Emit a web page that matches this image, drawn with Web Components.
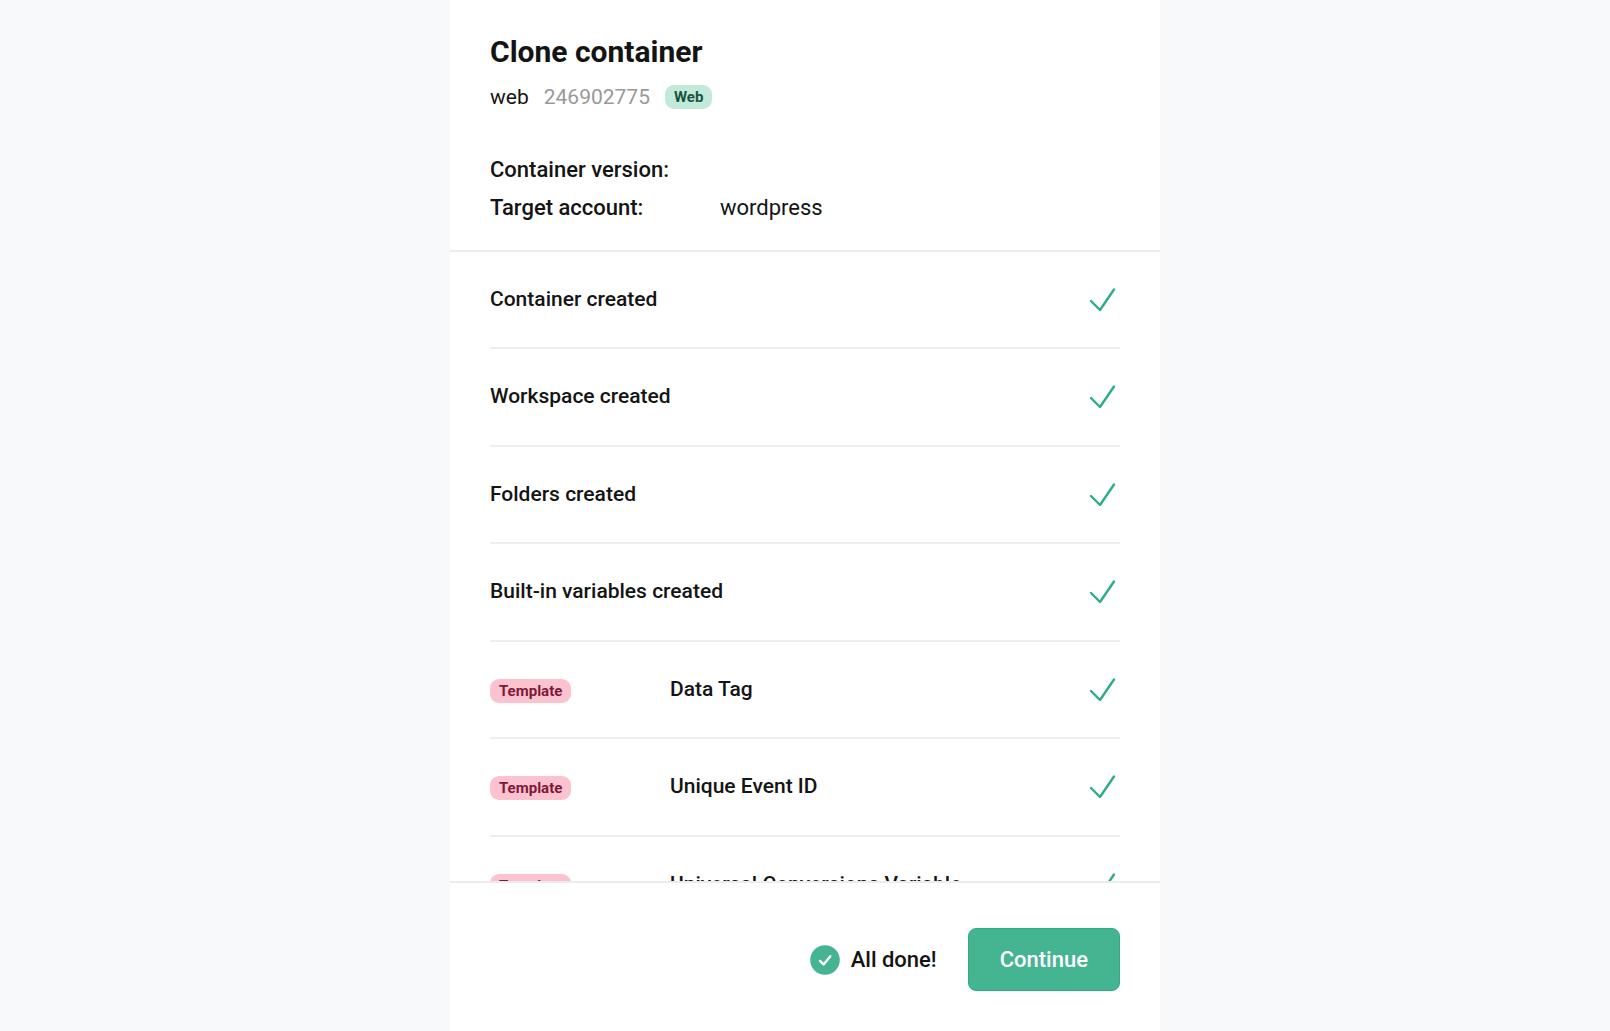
<!DOCTYPE html>
<html lang="en">
<head>
<meta charset="utf-8">
<meta name="viewport" content="width=device-width, initial-scale=1">
<title>Clone container</title>
<style>
  html, body { margin: 0; height: 100%; background: #f8f9fb; }
  body { font-family: Roboto, "Liberation Sans", sans-serif; color: #141414; display: flex; justify-content: center; }
</style>
</head>
<body>
<clone-panel>
  <clone-header slot="header" heading="Clone container" name="web" number="246902775" account="wordpress">
    <tag-badge slot="badge" tone="green">Web</tag-badge>
  </clone-header>
  <step-row>Container created</step-row>
  <step-row>Workspace created</step-row>
  <step-row>Folders created</step-row>
  <step-row>Built-in variables created</step-row>
  <step-row><tag-badge slot="kind" tone="pink">Template</tag-badge>Data Tag</step-row>
  <step-row><tag-badge slot="kind" tone="pink">Template</tag-badge>Unique Event ID</step-row>
  <step-row><tag-badge slot="kind" tone="pink">Template</tag-badge>Universal Conversions Variable</step-row>
  <panel-footer slot="footer" status="All done!">Continue</panel-footer>
</clone-panel>
<script>
const define = (name, html, setup) => customElements.define(name, class extends HTMLElement {
  constructor() {
    super();
    this.attachShadow({ mode: 'open' }).innerHTML = html;
  }
  connectedCallback() {
    this.shadowRoot.querySelectorAll('[data-attr]').forEach(node => {
      node.textContent = this.getAttribute(node.dataset.attr) || '';
    });
    if (setup) setup(this);
  }
});

define('tag-badge', `
<style>
  :host { display: inline-flex; align-items: center; height: 24px; padding: 0 9px; border-radius: 9px; font-size: 15px; line-height: 24px; font-weight: 700; }
  :host([tone=green]) { background: #c3e9db; color: #17543f; }
  :host([tone=pink]) { background: #fcc2d0; color: #7d1a38; }
</style><slot></slot>`);

define('clone-header', `
<style>
  :host { display: block; padding: 32px 40px 26px; border-bottom: 2px solid #ececec; }
  h1 { margin: 0; font-size: 30px; line-height: 40px; font-weight: 700; }
  .meta { display: flex; align-items: center; gap: 15px; margin-top: 9px; font-size: 21px; line-height: 32px; }
  .number { color: #999; }
  dl { display: grid; grid-template-columns: 200px 1fr; column-gap: 30px; row-gap: 6px; margin: 41px 0 0; font-size: 22px; line-height: 32px; }
  dt { font-weight: 500; }
  dd { margin: 0; }
</style>
<h1 data-attr="heading"></h1>
<div class="meta"><span data-attr="name"></span><span class="number" data-attr="number"></span><slot name="badge"></slot></div>
<dl><dt>Container version:</dt><dd></dd><dt>Target account:</dt><dd data-attr="account"></dd></dl>`);

define('step-row', `
<style>
  :host { display: flex; align-items: center; box-sizing: border-box; height: 98px; border-bottom: 2px solid #eeeeee; font-size: 21px; line-height: 32px; font-weight: 500; }
  :host(:nth-child(even)) { height: 97px; }
  .kind { width: 180px; padding-top: 2px; display: flex; }
  .kind[hidden] { display: none; }
  .text { flex: 1; padding-bottom: 2px; }
  svg { width: 36px; height: 36px; }
</style>
<div class="kind"><slot name="kind"></slot></div>
<div class="text"><slot></slot></div>
<svg viewBox="0 0 36 36" fill="none" stroke="#2bae82" stroke-width="2.400" stroke-linecap="round" stroke-linejoin="round" role="img" aria-label="Done"><path d="M7 19L16 28L30 7.500"/></svg>`,
  host => { host.shadowRoot.querySelector('.kind').hidden = !host.querySelector('[slot=kind]'); });

define('panel-footer', `
<style>
  :host { display: flex; align-items: center; justify-content: flex-end; gap: 31px; padding: 45px 40px 40px; border-top: 2px solid #ececec; }
  .status { display: flex; align-items: center; gap: 11px; font-size: 22px; line-height: 32px; font-weight: 500; }
  svg { width: 30px; height: 30px; }
  button { height: 63px; padding: 0 31px; border: 1px solid #2fad82; border-radius: 8px; background: #45b490; color: #fff; font: 500 22px/32px Roboto, "Liberation Sans", sans-serif; cursor: pointer; }
</style>
<div class="status"><svg viewBox="0 0 30 30" fill="none" aria-hidden="true"><circle cx="15" cy="15" r="14.800" fill="#45b490"/><path d="M10 15.800L13.600 19.500L20.300 11.200" stroke="#fff" stroke-width="2.400" stroke-linecap="round" stroke-linejoin="round"/></svg><span data-attr="status"></span></div>
<button type="button"><slot></slot></button>`);

define('clone-panel', `
<style>
  :host { display: flex; flex-direction: column; box-sizing: border-box; width: 100%; max-width: 710px; height: 100%; background: #fff; }
  .list { flex: 1; min-height: 0; overflow: hidden; padding: 0 40px; }
</style>
<slot name="header"></slot>
<div class="list"><slot></slot></div>
<slot name="footer"></slot>`);
</script>
</body>
</html>
